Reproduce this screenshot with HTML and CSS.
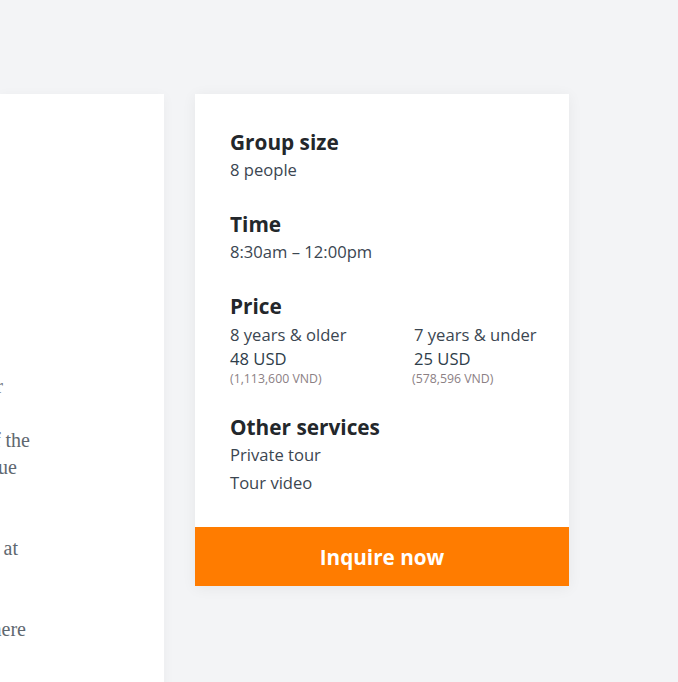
FILE: index.html
```html
<!DOCTYPE html>
<html lang="en">
<head>
<meta charset="utf-8">
<title>Tour details</title>
<link rel="stylesheet" href="styles.css">
</head>
<body>
<div class="page">
  <section class="story">
    <div class="prose">
      <p class="line end-3">the morning market, sampling street food along the way for</p>
      <p class="line end-off">and stopping by hidden corners most visitors never find.</p>
      <p class="line end-30">You will hear about the history and legends of the</p>
      <p class="line end-17">old quarter and the people who keep it unique</p>
      <p class="line end-off">in a city that never stops moving.</p>
      <p class="line end-off">&nbsp;</p>
      <p class="line end-18">Our guides are locals who love what they do at</p>
      <p class="line end-off">every step of the journey.</p>
      <p class="line end-off">&nbsp;</p>
      <p class="line end-26">Come hungry, and enjoy the best bites from here</p>
    </div>
  </section>

  <aside class="card">
    <div class="card-body">
      <div class="group">
        <h3 class="label">Group size</h3>
        <p class="value">8 people</p>
      </div>
      <div class="group">
        <h3 class="label">Time</h3>
        <p class="value">8:30am – 12:00pm</p>
      </div>
      <div class="group">
        <h3 class="label">Price</h3>
        <div class="prices">
          <div class="price">
            <p class="age">8 years &amp; older</p>
            <p class="amount">48 USD</p>
            <p class="local">(1,113,600 VND)</p>
          </div>
          <div class="price">
            <p class="age">7 years &amp; under</p>
            <p class="amount">25 USD</p>
            <p class="local">(578,596 VND)</p>
          </div>
        </div>
      </div>
      <div class="group">
        <h3 class="label">Other services</h3>
        <p class="value">Private tour</p>
        <p class="value">Tour video</p>
      </div>
    </div>
    <button class="inquire">Inquire now</button>
  </aside>
</div>
</body>
</html>
```

FILE: styles.css
```css
* { box-sizing: border-box; }

html, body {
  margin: 0;
  padding: 0;
  height: 100%;
}

body {
  background: #f3f4f6;
  font-family: "Open Sans", "Liberation Sans", sans-serif;
  overflow: hidden;
}

.page {
  display: flex;
  align-items: flex-start;
  gap: 31px;
  padding-top: 94px;
  min-height: 100%;
}

.story {
  width: 164px;
  flex: none;
  align-self: stretch;
  min-height: 600px;
  background: #ffffff;
  overflow: hidden;
  box-shadow: 0 2px 12px rgba(0, 0, 0, 0.04);
}

.prose {
  width: 640px;
  margin-left: -610px;
  padding-top: 279px;
  font-family: "Liberation Serif", "DejaVu Serif", serif;
  font-size: 20px;
  color: #5f6870;
}

.line {
  margin: 0;
  height: 27px;
  line-height: 27px;
  white-space: nowrap;
  text-align: right;
}

.end-30 { padding-right: 0; }
.end-26 { padding-right: 4px; }
.end-18 { padding-right: 12px; }
.end-17 { padding-right: 13px; }
.end-3 { padding-right: 27px; }
.end-off { padding-right: 60px; visibility: hidden; }

.card {
  width: 374px;
  flex: none;
  background: #ffffff;
  box-shadow: 0 2px 14px rgba(0, 0, 0, 0.06);
  display: flex;
  flex-direction: column;
}

.card-body {
  padding: 34px 35px 30px;
  display: flex;
  flex-direction: column;
  gap: 26px;
}

.label {
  margin: 0;
  font-size: 20.8px;
  line-height: 28px;
  font-weight: 700;
  color: #23272b;
}

.value {
  margin: 0;
  font-size: 16.6px;
  line-height: 28px;
  color: #3b4651;
}

.prices {
  display: grid;
  grid-template-columns: 184px 1fr;
  margin-top: 3px;
}

.price p {
  margin: 0;
  white-space: nowrap;
}

.age, .amount {
  font-size: 16.6px;
  line-height: 24px;
  color: #3b4651;
}

.amount { color: #2e3d4a; }

.local {
  font-size: 12.3px;
  line-height: 16px;
  color: #8b8084;
}

.price + .price .local { margin-left: -2px; }

.inquire {
  display: block;
  width: 100%;
  height: 59px;
  border: 0;
  margin: 0;
  background: #ff7c00;
  color: #ffffff;
  font-family: "Open Sans", "Liberation Sans", sans-serif;
  font-size: 20.7px;
  font-weight: 700;
  cursor: pointer;
}
```
